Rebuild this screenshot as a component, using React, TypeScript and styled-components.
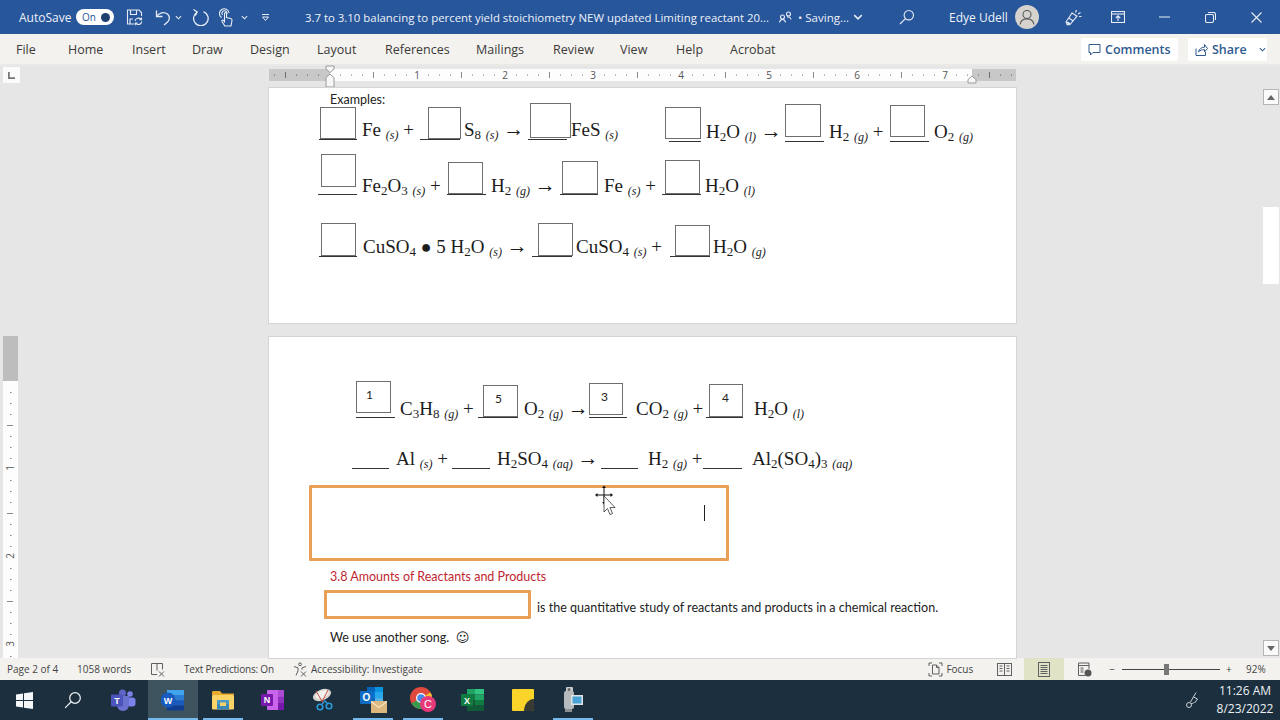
import React from 'react';
import styled, { createGlobalStyle } from 'styled-components';

const UI = '"Open Sans", "Noto Sans", "Liberation Sans", sans-serif';
const DOC = 'Lato, "Open Sans", sans-serif';

const Global = createGlobalStyle`
  html, body { margin: 0; padding: 0; overflow: hidden; background: #e6e6e6; }
`;

const Shell = styled.div`
  width: 1280px; height: 720px; display: flex; flex-direction: column; overflow: hidden;
  font-family: ${UI};
`;

/* ---------- title bar ---------- */
const TitleBar = styled.header`
  height: 34px; flex: none; background: #27569b; color: #eef2f8;
  display: flex; align-items: center; font-size: 12px; white-space: nowrap;
`;
const TitleItem = styled.div<{ $ml?: number; $w?: number }>`
  margin-left: ${p => p.$ml ?? 0}px;
  ${p => (p.$w ? `width: ${p.$w}px;` : '')}
  display: flex; align-items: center; justify-content: center; flex: none;
`;
const TitleText = styled.span<{ $ml: number; $w: number; $size?: number }>`
  margin-left: ${p => p.$ml}px; width: ${p => p.$w}px; flex: none;
  font-size: ${p => p.$size ?? 12}px; overflow: visible;
`;
const Toggle = styled.div`
  margin-left: 6px; width: 38px; height: 16px; border-radius: 8px; background: #fff; flex: none;
  display: flex; align-items: center; justify-content: space-between; padding: 0 4px 0 6px; box-sizing: border-box;
  color: #27569b; font-size: 10px;
`;
const Knob = styled.i`
  width: 9px; height: 9px; border-radius: 50%; background: #1f3f70; display: block;
`;
const Avatar = styled.div`
  margin-left: 10px; width: 24px; height: 24px; border-radius: 50%; background: #d6d3ce; flex: none;
  display: flex; align-items: center; justify-content: center;
`;

/* ---------- menu bar ---------- */
const MenuBar = styled.nav`
  height: 30px; flex: none; background: #f3f2ef; display: flex; align-items: center; padding: 0 13px 0 16px;
  border-bottom: 2px solid #e9e9e7;
`;
const Tab = styled.span<{ $w: number }>`
  width: ${p => p.$w}px; flex: none; font-size: 12.5px; color: #3b3a39; white-space: nowrap;
`;
const ActionButton = styled.button<{ $w: number; $ml?: number }>`
  width: ${p => p.$w}px; height: 23px; margin-left: ${p => p.$ml ?? 0}px; flex: none;
  background: #fff; border: 0; border-radius: 2px; padding: 0 0 0 7px; box-sizing: border-box;
  display: flex; align-items: center; gap: 4px; font: 600 12.5px ${UI}; color: #2f5b90;
`;
const ShareCaret = styled.span` margin-left: 8px; display: flex; `;
const Push = styled.div` flex: 1; `;

/* ---------- workspace ---------- */
const Workspace = styled.main`
  flex: 1; min-height: 0; display: grid; grid-template-columns: 269px 747px 264px; background: #e6e6e6;
`;
const LeftGutter = styled.aside`
  display: flex; flex-direction: column; padding-left: 3px;
`;
const TabStop = styled.div`
  width: 17px; height: 16px; margin-top: 1px; background: #fbfbfb; flex: none;
  display: flex; align-items: center; justify-content: center;
`;
const VRuler = styled.div`
  margin-top: 253px; width: 15px; flex: 1; min-height: 0;
`;
const Center = styled.section`
  display: flex; flex-direction: column; padding-top: 3px; min-height: 0;
`;
const RulerBar = styled.div` height: 12px; flex: none; `;
const Page = styled.article<{ $h?: number }>`
  background: #fff; position: relative; flex: none;
  ${p => (p.$h ? `height: ${p.$h}px;` : '')}
  box-shadow: 0 0 0 1px #d4d4d4;
`;
const FirstPage = styled(Page)` margin-top: 7px; `;
const SecondPage = styled(Page)`
  margin-top: 14px; flex: 1; min-height: 0; overflow: hidden; padding-top: 42px; box-sizing: border-box;
`;
const Examples = styled.div`
  padding: 4px 0 0 61px; height: 16px; font: 12.5px/16px ${DOC}; color: #222;
`;
const Eq = styled.div<{ $h: number; $mt: number; $pl: number }>`
  height: ${p => p.$h}px; margin-top: ${p => p.$mt}px; padding-left: ${p => p.$pl}px;
  display: flex; align-items: flex-end;
`;
const Blank = styled.div<{ $w: number; $mb?: number }>`
  width: ${p => p.$w}px; margin-bottom: ${p => p.$mb ?? 1}px; flex: none;
  display: flex; flex-direction: column;
`;
const Box = styled.div<{ $ml?: number; $w: number; $h: number; $pad?: number; $gap?: number }>`
  margin-left: ${p => p.$ml ?? 0}px; width: ${p => p.$w}px; height: ${p => p.$h}px;
  margin-bottom: ${p => p.$gap ?? 0}px; box-sizing: border-box; border: 1px solid #6f6f6f;
  font: 12px/16px ${DOC}; color: #222; padding: 5px 0 0 ${p => p.$pad ?? 0}px;
`;
const Rule = styled.div<{ $ml?: number; $w: number }>`
  margin-left: ${p => p.$ml ?? 0}px; width: ${p => p.$w}px; height: 1px; background: #333;
`;
const Term = styled.div<{ $ml?: number; $w?: number; $mb?: number }>`
  margin-left: ${p => p.$ml ?? 0}px; ${p => (p.$w ? `width: ${p.$w}px;` : '')}
  margin-bottom: ${p => p.$mb ?? 0}px; flex: none; white-space: nowrap;
  font: 19px/20px "Liberation Serif", serif; color: #1c1c1c;
`;
const Sub = styled.span`
  font-size: 13px; line-height: 0; vertical-align: -3px;
`;
const Ph = styled.span`
  font-size: 12px; line-height: 0; vertical-align: -3px; font-style: italic;
`;
const Arrow = styled.span`
  font-size: 21px; line-height: 0;
`;
const Dot = styled.span`
  font-size: 18px; line-height: 0;
`;
const OrangeBox = styled.div<{ $w: number; $h: number; $ml: number }>`
  width: ${p => p.$w}px; height: ${p => p.$h}px; margin-left: ${p => p.$ml}px; flex: none;
  box-sizing: border-box; border: 3px solid #e89f56; border-radius: 1px; position: relative;
`;
const AnswerBox = styled(OrangeBox)` margin-top: 14px; `;
const Caret = styled.i`
  position: absolute; left: 392px; top: 17px; width: 1px; height: 16px; background: #222;
`;
const Pointer = styled.svg`
  position: absolute; left: 280px; top: -3px;
`;
const Heading = styled.h3`
  margin: 8px 0 0 61px; font: 12.5px/16px ${DOC}; color: #c01f30;
`;
const BodyRow = styled.div`
  margin-top: 5px; display: flex; align-items: center;
`;
const BodyText = styled.p<{ $ml?: number; $mt?: number }>`
  margin: ${p => p.$mt ?? 0}px 0 0 ${p => p.$ml ?? 0}px; font: 12.55px/16px ${DOC}; color: #222; white-space: pre;
`;
const Smile = styled.span`
  font: 13px/16px "DejaVu Sans", sans-serif;
`;
const RightGutter = styled.aside`
  display: flex; flex-direction: column; align-items: flex-end; padding-right: 1px;
`;
const ScrollBtn = styled.div<{ $mt: string; $mb?: number }>`
  width: 16px; height: 16px; margin-top: ${p => p.$mt}; margin-bottom: ${p => p.$mb ?? 0}px;
  box-sizing: border-box; background: #fafafa; border: 1px solid #b5b5b5; flex: none;
  display: flex; align-items: center; justify-content: center;
`;
const Thumb = styled.div`
  width: 16px; height: 77px; margin-top: 102px; background: #fff; flex: none;
`;

/* ---------- status bar ---------- */
const StatusBar = styled.footer`
  height: 22px; flex: none; background: #f3f2ef; display: flex; align-items: center;
  font-size: 10px; color: #444; white-space: nowrap;
`;
const Stat = styled.div<{ $ml: number; $w?: number; $tight?: boolean }>`
  margin-left: ${p => p.$ml}px; ${p => (p.$w ? `width: ${p.$w}px;` : '')} flex: none;
  display: flex; align-items: center; gap: 3px;
  ${p => (p.$tight ? 'letter-spacing: -.2px;' : '')}
`;
const ViewBtn = styled.div<{ $active?: boolean; $ml: number }>`
  width: 40px; height: 22px; margin-left: ${p => p.$ml}px; flex: none;
  background: ${p => (p.$active ? '#e0e3c6' : 'transparent')};
  display: flex; align-items: center; justify-content: center;
`;
const Slider = styled.div`
  margin-left: 7px; width: 98px; height: 1px; background: #444; position: relative; flex: none;
`;
const SliderKnob = styled.i`
  position: absolute; left: 42px; top: -5px; width: 5px; height: 11px; background: #777; display: block;
`;

/* ---------- taskbar ---------- */
const Taskbar = styled.div`
  height: 40px; flex: none; background: #1b2f3e; display: flex; align-items: stretch; color: #eef1f3;
`;
const Cell = styled.div<{ $w?: number; $active?: boolean; $run?: boolean }>`
  width: ${p => p.$w ?? 50}px; flex: none; position: relative;
  display: flex; align-items: center; justify-content: center;
  background: ${p => (p.$active ? '#3d535e' : 'transparent')};
  &::after {
    content: ''; position: absolute; bottom: 0; left: ${p => (p.$active ? 0 : 5)}px; right: ${p => (p.$active ? 0 : 5)}px;
    height: 2px; background: ${p => (p.$run ? '#76b9ed' : 'transparent')};
  }
`;
const Tray = styled.div`
  margin-left: auto; display: flex; align-items: center; padding-right: 7px;
`;
const Clock = styled.div`
  margin-left: 16px; width: 56px; display: flex; flex-direction: column; align-items: center; gap: 2px;
  font-size: 12px; line-height: 16px;
`;

/* ---------- icons ---------- */
const S = { fill: 'none', stroke: '#e8edf5', strokeWidth: 1.1 } as const;
const G = { fill: 'none', stroke: '#5f5f5f', strokeWidth: 1 } as const;

const Chevron = ({ color = '#e8edf5', size = 7 }: { color?: string; size?: number }) => (
  <svg width={size} height={size} viewBox="0 0 8 8"><path d="M1 2.5 4 5.5 7 2.5" fill="none" stroke={color} strokeWidth="1.2" /></svg>
);
const SaveIcon = () => (
  <svg width="17" height="18" viewBox="0 0 17 18" {...S}>
    <path d="M8 16H1.5V2H13l2.5 2.5V8" /><path d="M4.5 2v4.5h6V2M4 16v-5h3" />
    <path d="M9 13a3.4 3.4 0 0 1 6-1.6M15.8 13.5a3.4 3.4 0 0 1-6 1.8" /><path d="M15.5 9.5v2.2h-2.2M9.3 17.3v-2.2h2.2" />
  </svg>
);
const UndoIcon = () => (
  <svg width="16" height="17" viewBox="0 0 16 17" {...S} strokeWidth={1.3}>
    <path d="M1.5 1.5v6h6" /><path d="M1.5 7.5C4 3.5 9 2.5 12.5 5c3 2.6 2 6.5-.5 8.5l-3 2.5" />
  </svg>
);
const RedoIcon = () => (
  <svg width="17" height="18" viewBox="0 0 17 18" {...S} strokeWidth={1.3}>
    <path d="M5 4.2a7.3 7.3 0 1 0 6.5-.6" /><path d="M1.5 1.5 5.2 4 3.3 7.6" />
  </svg>
);
const TouchIcon = () => (
  <svg width="15" height="19" viewBox="0 0 15 19" {...S}>
    <path d="M2.5 9.5a4.8 4.8 0 1 1 7.5-4.5" /><path d="M3.5 7a2.6 2.6 0 1 1 4.5-1" />
    <path d="M5.8 18 3 13.5c-.5-1 .7-1.8 1.4-1l1.1 1.3V5.5c0-1.3 2-1.3 2 0v4l4.2 1c1 .3 1.5 1 1.3 2L12 18z" />
  </svg>
);
const QatIcon = () => (
  <svg width="9" height="9" viewBox="0 0 9 9" fill="#e8edf5"><rect x="1" y="1" width="7" height="1" /><path d="M1.5 4h6L4.5 7.5z" fill="none" stroke="#e8edf5" /></svg>
);
const PeopleIcon = () => (
  <svg width="13" height="13" viewBox="0 0 13 13" {...S}>
    <circle cx="3.5" cy="6" r="2" /><path d="M.5 11.5c.3-2 1.5-3 3-3s2.7 1 3 3" /><circle cx="9.5" cy="3" r="2" /><path d="M8 6c2-.5 3.7.6 4 2.5" />
  </svg>
);
const SearchIcon = ({ size = 16, color = '#e8edf5' }: { size?: number; color?: string }) => (
  <svg width={size} height={size} viewBox="0 0 16 16" fill="none" stroke={color} strokeWidth="1.1">
    <circle cx="9.8" cy="6.2" r="4.7" /><path d="M6.4 9.6 1 15" />
  </svg>
);
const UserIcon = () => (
  <svg width="18" height="18" viewBox="0 0 18 18" fill="none" stroke="#55585c" strokeWidth="1.1">
    <circle cx="9" cy="6.5" r="4" /><path d="M2 16.5c.6-3.7 3.4-5.6 7-5.6s6.4 1.9 7 5.6" />
  </svg>
);
const PenIcon = () => (
  <svg width="17" height="17" viewBox="0 0 17 17" {...S}>
    <path d="M5 15.5 1 13l6-9 5 3.2z" /><path d="M3.6 9 8 11.8" /><circle cx="3" cy="14.6" r="1.3" />
    <path d="M10.5 3.5 11.5 1M13 5l2.5-1.5M14 7.5h2.5" />
  </svg>
);
const RibbonIcon = () => (
  <svg width="14" height="12" viewBox="0 0 14 12" {...S}>
    <rect x=".5" y=".5" width="13" height="11" /><path d="M.5 3h13" /><path d="M7 10V5M4.8 7 7 4.8 9.2 7" />
  </svg>
);
const MinIcon = () => <svg width="11" height="2" viewBox="0 0 11 2"><path d="M0 1h11" stroke="#e8edf5" strokeWidth="1" /></svg>;
const RestoreIcon = () => (
  <svg width="11" height="11" viewBox="0 0 11 11" {...S}>
    <rect x=".5" y="2.5" width="8" height="8" rx="1.5" /><path d="M3 .5h5.5a2 2 0 0 1 2 2V8" />
  </svg>
);
const CloseIcon = () => <svg width="11" height="11" viewBox="0 0 11 11" {...S}><path d="M.5.5l10 10M10.5.5l-10 10" /></svg>;
const CommentIcon = () => (
  <svg width="13" height="13" viewBox="0 0 13 13" fill="none" stroke="#2f5b90" strokeWidth="1"><path d="M1 1.5h11v8H5L2.5 12V9.5H1z" /></svg>
);
const ShareIcon = () => (
  <svg width="13" height="13" viewBox="0 0 13 13" fill="none" stroke="#2f5b90" strokeWidth="1"><path d="M1 5.5v7h9.5V9" /><path d="M3.5 9C4 6 6.5 4.2 9.5 4.2V1.5L12.5 5.5l-3 3.5V6.6C7 6.6 5 7.4 3.5 9z" /></svg>
);
const TabStopIcon = () => (
  <svg width="7" height="7" viewBox="0 0 8 8"><path d="M1 0v7h7" fill="none" stroke="#777" strokeWidth="2" /></svg>
);
const ProofIcon = () => (
  <svg width="15" height="15" viewBox="0 0 15 15" {...G}>
    <path d="M7 1.5H1.5v11H7M7 1.5h5.5v6M7 1.5v7" /><path d="M9 9.5l5 5M14 9.5l-5 5" />
  </svg>
);
const AccessIcon = () => (
  <svg width="15" height="15" viewBox="0 0 15 15" {...G}>
    <circle cx="7" cy="2.3" r="1.4" /><path d="M1 4.5l4 1.3v3L3 13.5M13 4.5l-4 1.3v2M5 9" /><path d="M8 9.5l5 5M13 9.5l-5 5" />
  </svg>
);
const FocusIcon = () => (
  <svg width="15" height="15" viewBox="0 0 15 15" {...G}>
    <path d="M1 4V1h3M11 1h3v3M1 11v3h3M11 14h3v-3" /><path d="M4.5 3h4l2.5 2.5V12H4.500zM8.500 3v2.500H11" />
  </svg>
);
const ReadIcon = () => (
  <svg width="15" height="13" viewBox="0 0 15 13" {...G}>
    <rect x=".5" y=".5" width="14" height="12" /><path d="M7.500.5v12M2.500 3h3M2.500 5.500h3M2.500 8h3M9.500 3h3M9.500 5.500h3M9.500 8h3" />
  </svg>
);
const PrintIcon = () => (
  <svg width="12" height="15" viewBox="0 0 12 15" {...G}>
    <rect x=".5" y=".5" width="11" height="14" /><path d="M2.500 3.500h7M2.500 5.500h7M2.500 7.500h7M2.500 9.500h7M2.500 11.500h7" />
  </svg>
);
const WebIcon = () => (
  <svg width="15" height="15" viewBox="0 0 15 15" {...G}>
    <path d="M8 13.500H1.500V1H12v6" /><path d="M1.500 3.500H12M3.500 6h3M3.500 8h3M3.500 10h3" />
    <circle cx="11" cy="11" r="3.500" fill="#555" stroke="none" />
  </svg>
);
const PenTrayIcon = () => (
  <svg width="16" height="18" viewBox="0 0 16 18" fill="none" stroke="#c9d0d6" strokeWidth="1">
    <path d="M11 1.500 5.500 11M8.500 6l4 2-3 4" /><circle cx="4" cy="14" r="2.500" /><path d="M6 12.500c1.500.2 2.500-.2 3-1" />
  </svg>
);
const WinIcon = () => (
  <svg width="17" height="17" viewBox="0 0 17 17" fill="#f4f6f7"><path d="M0 2.400 7 1.400v6.600H0zM8 1.200 17 0v8H8zM0 9h7v6.600L0 14.600zM8 9h9v8l-9-1.200z" /></svg>
);
const Letter = ({ x, y, children, size = 9, fill = '#fff' }: { x: number; y: number; children: string; size?: number; fill?: string }) => (
  <text x={x} y={y} fontFamily="Liberation Sans, sans-serif" fontWeight="700" fontSize={size} fill={fill} textAnchor="middle">{children}</text>
);
const TeamsIcon = () => (
  <svg width="25" height="22" viewBox="0 0 25 22">
    <circle cx="19" cy="5" r="2.800" fill="#7b83eb" /><rect x="16" y="8.500" width="8.500" height="9" rx="3" fill="#7b83eb" />
    <circle cx="11.500" cy="4" r="3.500" fill="#5d65c6" /><path d="M6 7h12v9a6 6 0 0 1-12 0z" fill="#6a72d0" />
    <rect x="0" y="5.500" width="12" height="12" rx="1" fill="#4b53bc" /><Letter x={6} y={15}>T</Letter>
  </svg>
);
const WordIcon = () => (
  <svg width="24" height="22" viewBox="0 0 24 22">
    <rect x="6" y="1" width="17" height="5" fill="#41a5ee" /><rect x="6" y="6" width="17" height="5.500" fill="#2b7cd3" />
    <rect x="6" y="11.500" width="17" height="5" fill="#185abd" /><rect x="6" y="16.500" width="17" height="5" fill="#103f91" />
    <circle cx="7" cy="11" r="7.500" fill="#185abd" /><Letter x={7} y={14.500}>W</Letter>
  </svg>
);
const FolderIcon = () => (
  <svg width="22" height="20" viewBox="0 0 22 20">
    <path d="M0 2.500C0 1.500.6 1 1.500 1H8l2 2.500h12V5H0z" fill="#e8a92e" /><rect y="5" width="22" height="14.500" rx="1" fill="#fbd366" />
    <path d="M6 10h10c.7 0 1 .4 1 1v3h-3v-1.500H8V14H5v-3c0-.6.4-1 1-1z" fill="#4f9bc8" /><rect x="5" y="14" width="12" height="5.500" fill="#3a88b8" />
    <rect x="8" y="13" width="6" height="3" fill="#fbd366" />
  </svg>
);
const OneNoteIcon = () => (
  <svg width="24" height="22" viewBox="0 0 24 22">
    <rect x="6" y="1" width="17" height="20" rx="1" fill="#ca64ea" /><rect x="17" y="1" width="6" height="6.500" fill="#ae4bd5" /><rect x="17" y="7.500" width="6" height="6.500" fill="#9332bf" /><rect x="17" y="14" width="6" height="7" fill="#7719aa" />
    <rect y="5" width="12" height="12" rx="1" fill="#7719aa" /><Letter x={6} y={14.300}>N</Letter>
  </svg>
);
const SnipIcon = () => (
  <svg width="24" height="24" viewBox="0 0 24 24">
    <ellipse cx="11" cy="7" rx="9.500" ry="5.500" transform="rotate(-22 11 7)" fill="#d9d4d0" /><ellipse cx="11" cy="6.500" rx="7" ry="3.500" transform="rotate(-22 11 6.500)" fill="#f3f1ef" />
    <path d="M5 3l7 12M17 2 11 14" stroke="#c94a3f" strokeWidth="1" />
    <circle cx="9" cy="19" r="2.800" fill="none" stroke="#2c9ad6" strokeWidth="1.600" /><circle cx="18" cy="18" r="2.800" fill="none" stroke="#2c9ad6" strokeWidth="1.600" />
    <path d="M11 16l3-3 3 3" fill="none" stroke="#2c9ad6" strokeWidth="1.400" />
  </svg>
);
const OutlookIcon = () => (
  <svg width="27" height="26" viewBox="0 0 27 26">
    <rect x="7" y="0" width="8" height="5" fill="#0364b8" /><rect x="15" y="0" width="8" height="5" fill="#0a94e2" /><rect x="7" y="5" width="8" height="6" fill="#0078d4" /><rect x="15" y="5" width="8" height="6" fill="#28a8ea" /><rect x="7" y="11" width="8" height="5" fill="#0364b8" /><rect x="15" y="11" width="8" height="5" fill="#50b0ea" />
    <rect y="4" width="13" height="13" rx="1" fill="#0f6cc4" /><Letter x={6.500} y={14} size={10}>O</Letter>
    <rect x="11" y="14" width="16" height="12" fill="#dcb87e" /><path d="M11 14.500l8 6 8-6" fill="none" stroke="#f4e4c4" strokeWidth="1.200" />
  </svg>
);
const ChromeIcon = () => (
  <svg width="27" height="26" viewBox="0 0 27 26">
    <circle cx="11" cy="11" r="11" fill="#e04a3c" /><path d="M11 11 1.500 16.500A11 11 0 0 0 11 22c1.500 0 3-.3 4-.8z" fill="#3a9b4f" /><path d="M11 11l9.500-5.500A11 11 0 0 1 16 20.800z" fill="#f2c230" />
    <circle cx="11" cy="11" r="5" fill="#fff" /><circle cx="11" cy="11" r="3.800" fill="#4a88e8" />
    <circle cx="18" cy="17" r="8" fill="#e63a78" /><text x="18" y="21" fontFamily="Liberation Sans, sans-serif" fontSize="11" fill="#fff" textAnchor="middle">C</text>
  </svg>
);
const ExcelIcon = () => (
  <svg width="24" height="22" viewBox="0 0 24 22">
    <rect x="6" y="0" width="8" height="5.500" fill="#21a366" /><rect x="14" y="0" width="9" height="5.500" fill="#33c481" /><rect x="6" y="5.500" width="8" height="5.500" fill="#107c41" /><rect x="14" y="5.500" width="9" height="5.500" fill="#21a366" /><rect x="6" y="11" width="8" height="5.500" fill="#185c37" /><rect x="14" y="11" width="9" height="5.500" fill="#107c41" /><rect x="6" y="16.500" width="17" height="5.500" fill="#0f5c36" />
    <rect y="5" width="12" height="12" rx="1" fill="#107c41" /><Letter x={6} y={14.500}>X</Letter>
  </svg>
);
const StickyIcon = () => (
  <svg width="22" height="22" viewBox="0 0 22 22">
    <path d="M1 0h20a1 1 0 0 1 1 1v20a1 1 0 0 1-1 1H1a1 1 0 0 1-1-1V1a1 1 0 0 1 1-1z" fill="#fbd42a" />
    <path d="M22 10v11a1 1 0 0 1-1 1H12c0-6 4-12 10-12z" fill="#3a3a34" />
  </svg>
);
const CameraIcon = () => (
  <svg width="20" height="26" viewBox="0 0 20 26">
    <rect x="3" y="0" width="7" height="5" rx="1" fill="#c9ccce" /><rect x="1" y="4" width="10" height="18" rx="2" fill="#b7babc" /><rect x="2" y="22" width="7" height="3" fill="#8d9092" />
    <rect x="8" y="8" width="12" height="10" fill="#dfe3e5" /><rect x="9.500" y="9.500" width="9" height="7" fill="#4aa3d6" /><circle cx="6" cy="2.500" r="1.500" fill="#666" />
  </svg>
);

const TopRuler = () => {
  const ticks: React.ReactNode[] = [];
  for (let i = -5; i <= 62; i++) {
    const x = 60.5 + i * 11;
    if (x < 2 || x > 745 || (i % 8 === 0 && i >= 0 && i <= 56)) continue;
    const major = ((i % 8) + 8) % 4 === 0;
    ticks.push(<rect key={i} x={x - .5} y={major ? 3 : 5.5} width="1" height={major ? 6 : 1.2} fill={x < 61 || x > 703 ? '#6e6e6e' : '#8a8a8a'} />);
  }
  return (
    <svg width="747" height="12" style={{ display: 'block', overflow: 'visible' }}>
      <rect width="747" height="12" fill="#c8c8c8" /><rect x="61" width="642" height="12" fill="#fdfdfd" />
      {ticks}
      {[1, 2, 3, 4, 5, 6, 7].map(n => (
        <text key={n} x={60 + n * 88} y="10" fontSize="10" fontFamily="Open Sans, sans-serif" fill="#555" textAnchor="middle">{n}</text>
      ))}
      <path d="M57 -3h8v3l-4 3.500-4-3.500z" fill="#f7f7f7" stroke="#999" />
      <path d="M61 5l4 3.500V18h-8V8.500z" fill="#f7f7f7" stroke="#999" />
      <path d="M703 7l4 3.500V14h-8v-3.500z" fill="#f7f7f7" stroke="#999" />
    </svg>
  );
};

const SideRuler = () => {
  const ticks: React.ReactNode[] = [];
  for (let i = 0; i <= 25; i++) {
    const y = 45 + i * 11;
    if (i % 8 === 0) continue;
    const major = i % 4 === 0;
    ticks.push(<rect key={i} x={major ? 4 : 7} y={y} width={major ? 6 : 1.5} height="1" fill="#888" />);
  }
  return (
    <svg width="15" height="322" style={{ display: 'block' }}>
      <rect width="15" height="45" fill="#bdbdbd" /><rect y="45" width="15" height="277" fill="#fdfdfd" />
      {ticks}
      {[1, 2, 3].map(n => (
        <text key={n} x="0" y="0" fontSize="10" fontFamily="Open Sans, sans-serif" fill="#555" textAnchor="middle" transform={`translate(11 ${44 + n * 88}) rotate(-90)`}>{n}</text>
      ))}
    </svg>
  );
};

export default function App() {
  return (
    <Shell>
      <Global />
      <TitleBar>
        <TitleText $ml={19} $w={51}>AutoSave</TitleText>
        <Toggle>On<Knob /></Toggle>
        <TitleItem $ml={12}><SaveIcon /></TitleItem>
        <TitleItem $ml={12}><UndoIcon /></TitleItem>
        <TitleItem $ml={4}><Chevron /></TitleItem>
        <TitleItem $ml={10}><RedoIcon /></TitleItem>
        <TitleItem $ml={10}><TouchIcon /></TitleItem>
        <TitleItem $ml={7}><Chevron /></TitleItem>
        <TitleItem $ml={13}><QatIcon /></TitleItem>
        <TitleText $ml={35} $w={474} $size={11.4}>3.7 to 3.10 balancing to percent yield stoichiometry NEW updated Limiting reactant 20...</TitleText>
        <TitleItem><PeopleIcon /></TitleItem>
        <TitleText $ml={6} $w={52} $size={11.5}>• Saving...</TitleText>
        <TitleItem $ml={3}><Chevron size={10} /></TitleItem>
        <TitleItem $ml={36}><SearchIcon /></TitleItem>
        <TitleText $ml={34} $w={56}>Edye Udell</TitleText>
        <Avatar><UserIcon /></Avatar>
        <TitleItem $ml={26}><PenIcon /></TitleItem>
        <TitleItem $ml={29}><RibbonIcon /></TitleItem>
        <TitleItem $ml={34}><MinIcon /></TitleItem>
        <TitleItem $ml={35}><RestoreIcon /></TitleItem>
        <TitleItem $ml={35}><CloseIcon /></TitleItem>
      </TitleBar>

      <MenuBar>
        <Tab $w={52}>File</Tab>
        <Tab $w={64}>Home</Tab>
        <Tab $w={60}>Insert</Tab>
        <Tab $w={58}>Draw</Tab>
        <Tab $w={67}>Design</Tab>
        <Tab $w={68}>Layout</Tab>
        <Tab $w={91}>References</Tab>
        <Tab $w={77}>Mailings</Tab>
        <Tab $w={67}>Review</Tab>
        <Tab $w={56}>View</Tab>
        <Tab $w={54}>Help</Tab>
        <Tab $w={48}>Acrobat</Tab>
        <Push />
        <ActionButton $w={97}><CommentIcon />Comments</ActionButton>
        <ActionButton $w={79} $ml={10}><ShareIcon />Share<ShareCaret><Chevron color="#2f5b90" /></ShareCaret></ActionButton>
      </MenuBar>

      <Workspace>
        <LeftGutter>
          <TabStop><TabStopIcon /></TabStop>
          <VRuler><SideRuler /></VRuler>
        </LeftGutter>
        <Center>
          <RulerBar><TopRuler /></RulerBar>
          <FirstPage $h={235}>
            <Examples>Examples:</Examples>
            <Eq $h={34} $mt={0} $pl={50}>
              <Blank $w={38} $mb={2}><Box $ml={1} $w={36} $h={32} /><Rule $w={38} /></Blank>
              <Term $ml={5} $w={58} $mb={2}>Fe <Ph>(s)</Ph> +</Term>
              <Blank $w={41} $mb={2}><Box $ml={8} $w={33} $h={32} /><Rule $w={40} /></Blank>
              <Term $ml={3} $w={64} $mb={2}>S<Sub>8</Sub> <Ph>(s)</Ph> <Arrow>→</Arrow></Term>
              <Blank $w={43} $mb={2}><Box $ml={2} $w={41} $h={35} $gap={1} /><Rule $w={39} /></Blank>
              <Term $w={94} $mb={2}>FeS <Ph>(s)</Ph></Term>
              <Blank $w={36} $mb={0}><Box $w={36} $h={32} $gap={2} /><Rule $ml={4} $w={32} /></Blank>
              <Term $ml={5} $w={79}>H<Sub>2</Sub>O <Ph>(l)</Ph> <Arrow>→</Arrow></Term>
              <Blank $w={39} $mb={0}><Box $w={36} $h={33} $gap={4} /><Rule $w={39} /></Blank>
              <Term $ml={5} $w={61}>H<Sub>2</Sub> <Ph>(g)</Ph> +</Term>
              <Blank $w={39} $mb={0}><Box $w={35} $h={32} $gap={4} /><Rule $w={39} /></Blank>
              <Term $ml={5}>O<Sub>2</Sub> <Ph>(g)</Ph></Term>
            </Eq>
            <Eq $h={42} $mt={12} $pl={49}>
              <Blank $w={39}><Box $ml={3} $w={35} $h={33} $gap={7} /><Rule $w={39} /></Blank>
              <Term $ml={5} $w={85}>Fe<Sub>2</Sub>O<Sub>3</Sub> <Ph>(s)</Ph> +</Term>
              <Blank $w={39}><Box $ml={1} $w={35} $h={32} /><Rule $w={39} /></Blank>
              <Term $ml={5} $w={69}>H<Sub>2</Sub> <Ph>(g)</Ph> <Arrow>→</Arrow></Term>
              <Blank $w={38}><Box $ml={2} $w={36} $h={33} /><Rule $w={38} /></Blank>
              <Term $ml={6} $w={58}>Fe <Ph>(s)</Ph> +</Term>
              <Blank $w={39}><Box $ml={3} $w={35} $h={34} /><Rule $w={39} /></Blank>
              <Term $ml={4}>H<Sub>2</Sub>O <Ph>(l)</Ph></Term>
            </Eq>
            <Eq $h={40} $mt={22} $pl={50}>
              <Blank $w={38}><Box $ml={2} $w={35} $h={33} /><Rule $w={38} /></Blank>
              <Term $ml={6} $w={169} $mb={1}>CuSO<Sub>4</Sub> <Dot>●</Dot> 5 H<Sub>2</Sub>O <Ph>(s)</Ph> <Arrow>→</Arrow></Term>
              <Blank $w={41}><Box $ml={6} $w={35} $h={33} /><Rule $w={40} /></Blank>
              <Term $ml={3} $w={94} $mb={1}>CuSO<Sub>4</Sub> <Ph>(s)</Ph> +</Term>
              <Blank $w={40}><Box $ml={5} $w={35} $h={31} /><Rule $w={40} /></Blank>
              <Term $ml={3} $mb={1}>H<Sub>2</Sub>O <Ph>(g)</Ph></Term>
            </Eq>
          </FirstPage>

          <SecondPage>
            <Eq $h={40} $mt={0} $pl={87}>
              <Blank $w={39}><Box $w={35} $h={32} $gap={4} $pad={9}>1</Box><Rule $w={39} /></Blank>
              <Term $ml={5} $w={78}>C<Sub>3</Sub>H<Sub>8</Sub> <Ph>(g)</Ph> +</Term>
              <Blank $w={40}><Box $ml={5} $w={35} $h={32} $pad={11}>5</Box><Rule $w={40} /></Blank>
              <Term $ml={6} $w={65}>O<Sub>2</Sub> <Ph>(g)</Ph> <Arrow>→</Arrow></Term>
              <Blank $w={38}><Box $w={34} $h={32} $gap={2} $pad={11}>3</Box><Rule $w={38} /></Blank>
              <Term $ml={9} $w={70}>CO<Sub>2</Sub> <Ph>(g)</Ph> +</Term>
              <Blank $w={37}><Box $ml={3} $w={34} $h={33} $pad={12}>4</Box><Rule $w={37} /></Blank>
              <Term $ml={11}>H<Sub>2</Sub>O <Ph>(l)</Ph></Term>
            </Eq>
            <Eq $h={30} $mt={22} $pl={83}>
              <Blank $w={37} $mb={2}><Rule $w={37} /></Blank>
              <Term $ml={7} $w={56} $mb={2}>Al <Ph>(s)</Ph> +</Term>
              <Blank $w={38} $mb={2}><Rule $w={38} /></Blank>
              <Term $ml={7} $w={104} $mb={2}>H<Sub>2</Sub>SO<Sub>4</Sub> <Ph>(aq)</Ph> <Arrow>→</Arrow></Term>
              <Blank $w={37} $mb={2}><Rule $w={37} /></Blank>
              <Term $ml={10} $w={55} $mb={2}>H<Sub>2</Sub> <Ph>(g)</Ph> +</Term>
              <Blank $w={39} $mb={2}><Rule $w={39} /></Blank>
              <Term $ml={10} $mb={2}>Al<Sub>2</Sub>(SO<Sub>4</Sub>)<Sub>3</Sub> <Ph>(aq)</Ph></Term>
            </Eq>
            <AnswerBox $w={420} $h={76} $ml={40}>
              <Caret />
              <Pointer width="24" height="34" viewBox="0 0 24 34">
                <path d="M12 3v14M5 10h14" stroke="#111" strokeWidth="1" />
                <path d="M12 .5 10 3h4zM12 19.500 10 17h4zM3 10l2.500-2v4zM21 10l-2.500-2v4z" fill="#111" />
                <path d="M12 11v16l3.500-3.500 2.500 6 2.500-1-2.500-6h5z" fill="#fff" stroke="#333" strokeWidth=".8" />
              </Pointer>
            </AnswerBox>
            <Heading>3.8 Amounts of Reactants and Products</Heading>
            <BodyRow>
              <OrangeBox $w={207} $h={29} $ml={55} />
              <BodyText $ml={6} $mt={6}>is the quantitative study of reactants and products in a chemical reaction.</BodyText>
            </BodyRow>
            <BodyText $ml={61} $mt={11}>We use another song.  <Smile>☺</Smile></BodyText>
          </SecondPage>
        </Center>
        <RightGutter>
          <ScrollBtn $mt="23px"><svg width="8" height="5"><path d="M0 5 4 0l4 5z" fill="#666" /></svg></ScrollBtn>
          <Thumb />
          <ScrollBtn $mt="auto" $mb={2}><svg width="8" height="5"><path d="M0 0 4 5l4-5z" fill="#666" /></svg></ScrollBtn>
        </RightGutter>
      </Workspace>

      <StatusBar>
        <Stat $ml={7} $w={52}>Page 2 of 4</Stat>
        <Stat $ml={18} $w={55}>1058 words</Stat>
        <Stat $ml={18}><ProofIcon /></Stat>
        <Stat $ml={19} $w={90} $tight>Text Predictions: On</Stat>
        <Stat $ml={19}><AccessIcon />Accessibility: Investigate</Stat>
        <Push />
        <Stat $ml={0}><FocusIcon />Focus</Stat>
        <ViewBtn $ml={11}><ReadIcon /></ViewBtn>
        <ViewBtn $active $ml={0}><PrintIcon /></ViewBtn>
        <ViewBtn $ml={0}><WebIcon /></ViewBtn>
        <Stat $ml={5}>−</Stat>
        <Slider><SliderKnob /></Slider>
        <Stat $ml={6} $w={10}>+</Stat>
        <Stat $ml={10} $w={34}>92%</Stat>
      </StatusBar>

      <Taskbar>
        <Cell $w={48}><WinIcon /></Cell>
        <Cell><SearchIcon size={18} color="#eef1f3" /></Cell>
        <Cell><TeamsIcon /></Cell>
        <Cell $active $run><WordIcon /></Cell>
        <Cell $run><FolderIcon /></Cell>
        <Cell><OneNoteIcon /></Cell>
        <Cell><SnipIcon /></Cell>
        <Cell $run><OutlookIcon /></Cell>
        <Cell $run><ChromeIcon /></Cell>
        <Cell><ExcelIcon /></Cell>
        <Cell><StickyIcon /></Cell>
        <Cell $run><CameraIcon /></Cell>
        <Tray>
          <PenTrayIcon />
          <Clock><span>11:26 AM</span><span>8/23/2022</span></Clock>
        </Tray>
      </Taskbar>
    </Shell>
  );
}
